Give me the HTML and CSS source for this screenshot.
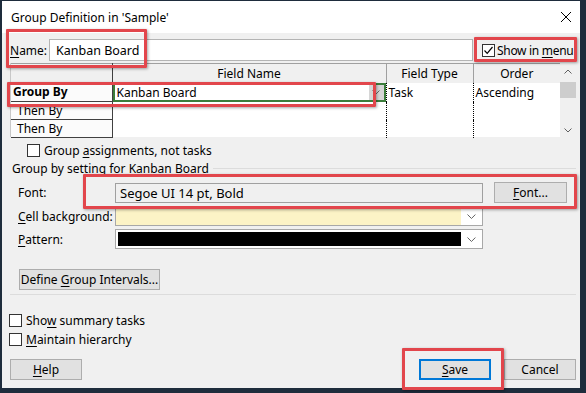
FILE: index.html
```html
<!DOCTYPE html>
<html lang="en">
<head>
    <meta charset="UTF-8">
    <title>Group Definition in 'Sample'</title>
    <link rel="stylesheet" href="styles.css">
</head>
<body>
    <div class="screen">
        <div class="window">
            <div class="titlebar">
                <span>Group Definition in 'Sample'</span>
                <svg class="close" width="12" height="12" viewBox="0 0 12 12">
                    <path d="M1 1L11 11M11 1L1 11" stroke="#000" stroke-width="1" fill="none"/>
                </svg>
            </div>

            <div class="content">
                <div class="name-row">
                    <span class="label-name"><u>N</u>ame:</span>
                    <div class="textbox">Kanban Board</div>
                    <span class="check menu-check">
                        <span class="box">
                            <svg width="11" height="11" viewBox="0 0 11 11"><path d="M1.5 5.5L4.2 8.3L9.5 2" stroke="#000" stroke-width="1.2" fill="none"/></svg>
                        </span>
                        <span>Show in <u>m</u>enu</span>
                    </span>
                </div>

                <div class="grid">
                    <table>
                        <thead>
                            <tr>
                                <th class="corner"></th>
                                <th class="col-name">Field Name</th>
                                <th class="col-type">Field Type</th>
                                <th class="col-order">Order</th>
                            </tr>
                        </thead>
                        <tbody>
                            <tr class="r1">
                                <td class="rowhead bold">Group By</td>
                                <td class="edit">
                                    <div class="edit-box">
                                        <span>Kanban Board</span>
                                        <span class="edit-btn">
                                            <svg width="8" height="5" viewBox="0 0 8 5"><path d="M0.5 0.5L4 4L7.5 0.5" stroke="#666" fill="none"/></svg>
                                        </span>
                                    </div>
                                </td>
                                <td class="dots">Task</td>
                                <td class="dots">Ascending</td>
                            </tr>
                            <tr class="r2">
                                <td class="rowhead indent">Then By</td>
                                <td></td>
                                <td class="dots"></td>
                                <td class="dots"></td>
                            </tr>
                            <tr class="r3">
                                <td class="rowhead indent">Then By</td>
                                <td></td>
                                <td class="dots"></td>
                                <td class="dots"></td>
                            </tr>
                        </tbody>
                    </table>
                    <div class="scrollbar">
                        <svg width="8" height="5" viewBox="0 0 8 5"><path d="M0.5 4.5L4 1L7.5 4.5" stroke="#606060" fill="none"/></svg>
                        <div class="thumb"></div>
                        <div class="spacer"></div>
                        <svg width="8" height="5" viewBox="0 0 8 5"><path d="M0.5 0.5L4 4L7.5 0.5" stroke="#606060" fill="none"/></svg>
                    </div>
                </div>

                <div class="check assign-check">
                    <span class="box"></span>
                    <span>Group <u>a</u>ssignments, not tasks</span>
                </div>

                <div class="group-title">Group by setting for Kanban Board</div>

                <div class="setting-row font-row">
                    <span class="setting-label">Font:</span>
                    <div class="font-field">Segoe UI 14 pt, Bold</div>
                    <div class="button font-btn"><span><u>F</u>ont...</span></div>
                </div>

                <div class="setting-row">
                    <span class="setting-label"><u>C</u>ell background:</span>
                    <div class="dropdown">
                        <div class="swatch yellow"></div>
                        <svg width="9" height="5" viewBox="0 0 9 5"><path d="M0.5 0.5L4.5 4.5L8.5 0.5" stroke="#606060" fill="none"/></svg>
                    </div>
                </div>

                <div class="setting-row pattern-row">
                    <span class="setting-label"><u>P</u>attern:</span>
                    <div class="dropdown">
                        <div class="swatch black"></div>
                        <svg width="9" height="5" viewBox="0 0 9 5"><path d="M0.5 0.5L4.5 4.5L8.5 0.5" stroke="#606060" fill="none"/></svg>
                    </div>
                </div>

                <div class="button intervals-btn"><span>Define <u>G</u>roup Intervals...</span></div>

                <div class="separator"></div>

                <div class="check summary-check">
                    <span class="box"></span>
                    <span>Sho<u>w</u> summary tasks</span>
                </div>
                <div class="check hierarchy-check">
                    <span class="box"></span>
                    <span><u>M</u>aintain hierarchy</span>
                </div>

                <div class="footer">
                    <div class="button"><span><u>H</u>elp</span></div>
                    <div class="footer-right">
                        <div class="button default"><span><u>S</u>ave</span></div>
                        <div class="button">Cancel</div>
                    </div>
                </div>
            </div>
        </div>

        <!-- red annotation boxes drawn over the dialog -->
        <div class="mark mark-name"></div>
        <div class="mark mark-menu"></div>
        <div class="mark mark-groupby"></div>
        <div class="mark mark-font"></div>
        <div class="mark mark-save"></div>
    </div>
</body>
</html>
```

FILE: styles.css
```css
* {
    box-sizing: border-box;
}
body {
    margin: 0;
    background-color: #1e2c3c;
    font-family: "Segoe UI", "Noto Sans", sans-serif;
    font-size: 12px;
    color: #000;
}
u {
    text-decoration-thickness: 1px;
    text-underline-offset: 2px;
}
.screen {
    position: relative;
    width: 586px;
    height: 393px;
    padding: 1px 6px 5px 2px;
}
.window {
    height: 100%;
    background-color: #f0f0f0;
    display: flex;
    flex-direction: column;
}
.titlebar {
    height: 32px;
    background-color: #fff;
    display: flex;
    align-items: center;
    justify-content: space-between;
    padding: 0 8px 0 9px;
}
.content {
    padding: 6px 4px 0 8px;
    display: flex;
    flex-direction: column;
}

/* name row */
.name-row {
    height: 22px;
    display: flex;
    align-items: center;
}
.label-name {
    width: 39px;
}
.textbox {
    width: 424px;
    height: 22px;
    background-color: #fff;
    border: 1px solid #b4b4b4;
    padding: 0 6px;
    display: flex;
    align-items: center;
    font-size: 12.5px;
}
.check {
    display: flex;
    align-items: center;
    height: 14px;
    white-space: nowrap;
}
.box {
    flex: none;
    width: 13px;
    height: 13px;
    border: 1px solid #333;
    background-color: #fff;
    margin-right: 4px;
    display: flex;
    align-items: center;
    justify-content: center;
}
.menu-check {
    margin-left: 9px;
    font-size: 12px;
    letter-spacing: -0.3px;
}
.menu-check .box {
    margin-right: 2px;
}

/* grid */
.grid {
    margin-top: 2px;
    height: 74px;
    display: flex;
    background-color: #fff;
    border-left: 1px solid #c8c8c8;
}
table {
    border-collapse: collapse;
    table-layout: fixed;
    width: 548px;
}
th {
    height: 19px;
    background-color: #f0f0f0;
    font-weight: normal;
    text-align: center;
    padding: 0;
    border-left: 1px solid #a0a0a0;
    border-top: 1px solid #a0a0a0;
}
th.corner {
    width: 101px;
    border-left: none;
    border-right: 1px solid #404040;
}
th.col-name {
    width: 274px;
}
th.col-type, th.col-order {
    width: 87px;
}
td {
    padding: 0 2px;
    white-space: nowrap;
    vertical-align: middle;
}
tr.r1 td {
    height: 19px;
}
tr.r2 td {
    height: 17px;
}
tr.r3 td {
    height: 18px;
}
td.rowhead {
    background-color: #fbfbfb;
    border-bottom: 1px solid #404040;
    border-right: 1px solid #404040;
    padding-left: 2px;
}
td.bold {
    font-weight: bold;
}
td.indent {
    padding-left: 6px;
}
td.dots {
    border-left: 1px dotted #000;
}
td.edit {
    padding: 0;
}
.edit-box {
    height: 19px;
    border: 2px solid #3b7d3b;
    display: flex;
    align-items: center;
    justify-content: space-between;
    padding-left: 2px;
}
.edit-btn {
    width: 15px;
    height: 15px;
    background-color: #d6d6d6;
    display: flex;
    align-items: center;
    justify-content: center;
}
.scrollbar {
    width: 18px;
    background-color: #f0f0f0;
    display: flex;
    flex-direction: column;
    align-items: center;
    padding-top: 6px;
    padding-bottom: 4px;
}
.scrollbar .thumb {
    width: 16px;
    height: 16px;
    background-color: #cdcdcd;
    margin-top: 8px;
}
.scrollbar .spacer {
    flex: 1;
}

/* settings */
.assign-check {
    margin-top: 6px;
    margin-left: 17px;
}
.group-title {
    margin-top: 4px;
    height: 14px;
    display: flex;
    align-items: center;
    padding-left: 2px;
}
.group-title::after {
    content: "";
    flex: 1;
    border-top: 1px solid #dcdcdc;
    margin-left: 4px;
}
.setting-row {
    margin-top: 3px;
    height: 20px;
    display: flex;
    align-items: center;
}
.setting-row.font-row {
    margin-top: 7px;
    height: 21px;
}
.setting-row.pattern-row {
    margin-top: 3px;
}
.setting-label {
    width: 97px;
    margin-left: 8px;
}
.font-field {
    width: 368px;
    height: 20px;
    border: 1px solid #a0a0a0;
    background-color: #f0f0f0;
    padding-left: 4px;
    display: flex;
    align-items: center;
    font-size: 13px;
}
.button {
    width: 72px;
    height: 21px;
    background-color: #e1e1e1;
    border: 1px solid #adadad;
    display: flex;
    align-items: center;
    justify-content: center;
    white-space: nowrap;
}
.font-btn {
    width: 73px;
    margin-left: 11px;
}
.dropdown {
    width: 368px;
    height: 20px;
    border: 1px solid #a8a8a8;
    background-color: #fff;
    display: flex;
    align-items: center;
    padding-right: 6px;
}
.dropdown svg {
    margin-left: 6px;
}
.swatch {
    width: 348px;
    align-self: stretch;
}
.swatch.yellow {
    background-color: #fcf3c6;
}
.swatch.black {
    background-color: #000;
    margin: 2px 0 2px 2px;
    width: 346px;
}
.intervals-btn {
    width: 141px;
    margin-top: 20px;
    margin-left: 9px;
}
.separator {
    margin-top: 4px;
    border-top: 1px solid #dcdcdc;
}
.summary-check {
    margin-top: 18px;
    margin-left: -1px;
}
.hierarchy-check {
    margin-top: 5px;
    margin-left: -1px;
}
.footer {
    margin-top: 13px;
    display: flex;
    justify-content: space-between;
}
.footer-right {
    display: flex;
    gap: 13px;
}
.button.default {
    border: 2px solid #0078d7;
}

/* red annotation boxes */
.mark {
    position: absolute;
    border: 3px solid #e2464c;
    border-radius: 1px;
    box-shadow: 1px 1px 3px rgba(0, 0, 0, 0.35);
}
.mark-name {
    left: 6px;
    top: 29px;
    width: 141px;
    height: 39px;
}
.mark-menu {
    left: 474px;
    top: 37px;
    width: 103px;
    height: 25px;
}
.mark-groupby {
    left: 7px;
    top: 82px;
    width: 369px;
    height: 25px;
}
.mark-font {
    left: 83px;
    top: 174px;
    width: 494px;
    height: 35px;
}
.mark-save {
    left: 402px;
    top: 348px;
    width: 102px;
    height: 42px;
}
```
